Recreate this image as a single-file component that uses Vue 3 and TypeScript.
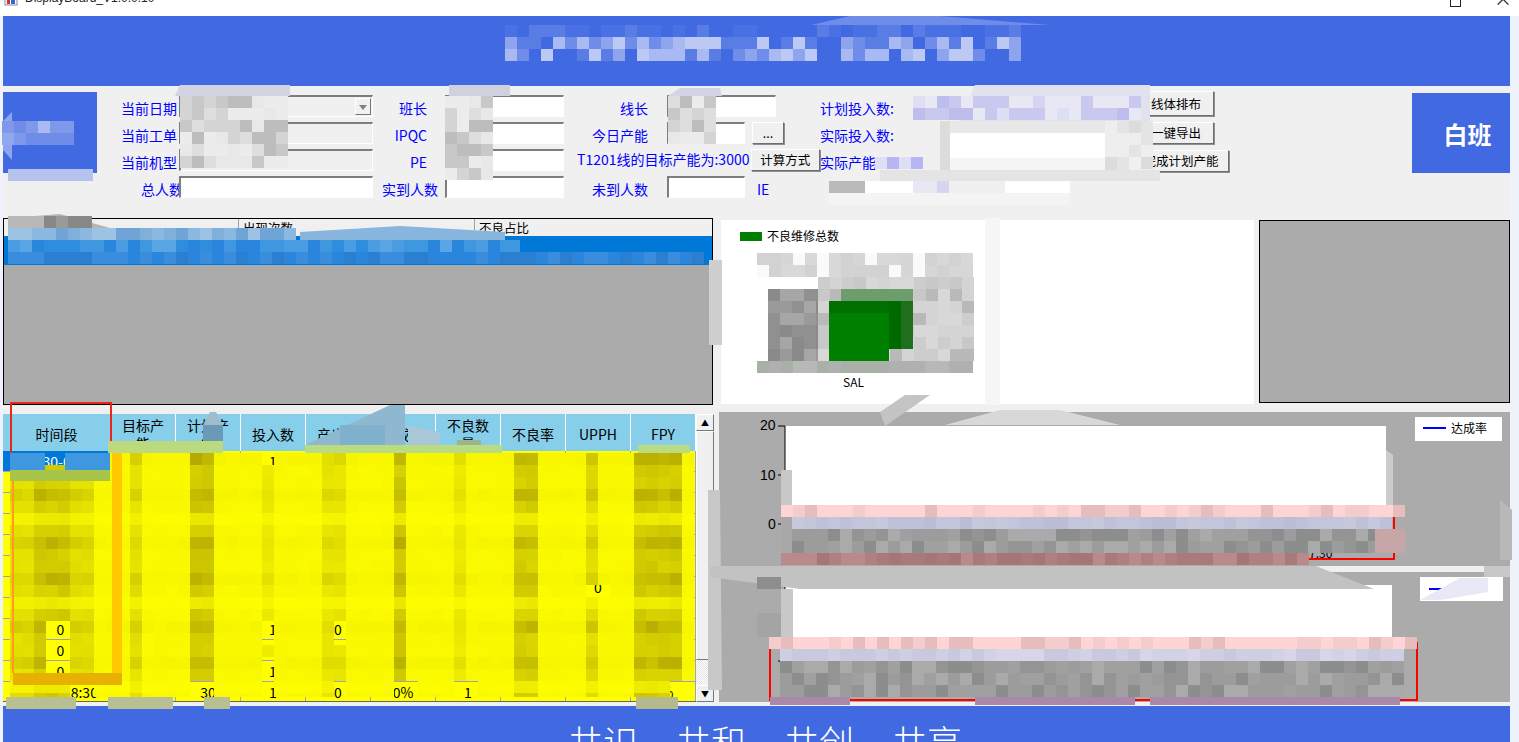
<template>
    <div class="screen">
        <div class="titlebar">
            <svg class="app-icon" width="14" height="14" viewBox="0 0 14 14">
                <rect x="1" y="1" width="12" height="12" fill="#fff" stroke="#7a8aa8" />
                <rect x="3" y="4" width="3" height="8" fill="#c33" />
                <rect x="7" y="2" width="4" height="10" fill="#36c" />
            </svg>
            <span class="app-title">DisplayBoard_V1.0.0.10</span>
            <span class="win-btn max"></span>
            <span class="win-btn close">×</span>
        </div>

        <main class="board">
            <header class="banner"></header>

            <section class="toolbar">
                <div class="logo"></div>
                <div class="form">
                    <label class="lbl first">当前日期</label>
                    <div class="field off combo"><i class="combo-btn"></i></div>
                    <label class="lbl mid">班长</label>
                    <div class="field"></div>
                    <label class="lbl end">线长</label>
                    <div class="field wide"></div>
                    <div></div>
                    <div></div>
                    <label class="lbl">计划投入数:</label>

                    <label class="lbl first">当前工单</label>
                    <div class="field off"></div>
                    <label class="lbl mid">IPQC</label>
                    <div class="field"></div>
                    <label class="lbl end">今日产能</label>
                    <div class="field"></div>
                    <div class="ctl-cell"><button class="btn dots">...</button></div>
                    <div></div>
                    <label class="lbl">实际投入数:</label>

                    <label class="lbl first">当前机型</label>
                    <div class="field off"></div>
                    <label class="lbl mid">PE</label>
                    <div class="field"></div>
                    <div class="target">
                        <span>T1201线的目标产能为:3000</span>
                        <button class="btn calc">计算方式</button>
                    </div>
                    <label class="lbl">实际产能</label>

                    <label class="lbl total">总人数</label>
                    <div class="field"></div>
                    <label class="lbl mid wide-lbl">实到人数</label>
                    <div class="field"></div>
                    <label class="lbl end">未到人数</label>
                    <div class="field"></div>
                    <label class="lbl ie">IE</label>
                </div>
                <div class="actions">
                    <button class="btn act">线体排布</button>
                    <button class="btn act">一键导出</button>
                    <button class="btn act long">完成计划产能</button>
                </div>
                <div class="shift">白班</div>
            </section>

            <section class="middle">
                <div class="defects">
                    <div class="defects-head">
                        <span class="h1"></span>
                        <span class="h2">出现次数</span>
                        <span class="h3">不良占比</span>
                    </div>
                    <div class="defects-row"></div>
                </div>
                <div class="pie-card">
                    <svg width="533" height="184" viewBox="0 0 533 184">
                        <rect x="19" y="12" width="22" height="9" fill="#008000" />
                        <text x="46" y="21" class="svg-txt">不良维修总数</text>
                        <text x="122" y="167" class="svg-txt">SAL</text>
                    </svg>
                </div>
                <div class="blank-card"></div>
            </section>

            <section class="bottom">
                <div class="grid-wrap">
                    <div class="grid">
                        <div v-for="h in heads" :key="h" class="th"><span>{{ h }}</span></div>
                        <template v-for="(row, r) in rows" :key="r">
                            <div
                                v-for="(c, i) in row"
                                :key="i"
                                class="td"
                                :class="{ sel: r === 0 && i === 0, time: i === 0 }"
                            >{{ c }}</div>
                        </template>
                    </div>
                    <div class="scroll">
                        <div class="sb-btn">▲</div>
                        <div class="sb-thumb"></div>
                        <div class="sb-track"></div>
                        <div class="sb-btn">▼</div>
                    </div>
                </div>
                <div class="charts">
                    <svg width="791" height="154" viewBox="0 0 791 154" class="chart">
                        <rect x="66" y="14" width="601" height="100" fill="#fff" />
                        <path d="M66 14V112M59 14H66M59 63H66M59 112H66" stroke="#000" fill="none" />
                        <text x="41" y="18" class="svg-num">20</text>
                        <text x="41" y="68" class="svg-num">10</text>
                        <text x="49" y="117" class="svg-num">0</text>
                        <rect x="696" y="5" width="87" height="24" fill="#fff" />
                        <path d="M704 16H727" stroke="#00f" stroke-width="2" />
                        <text x="732" y="21" class="svg-txt">达成率</text>
                        <path d="M675 94V147H66" stroke="#f00" stroke-width="2" fill="none" />
                        <text x="590" y="146" class="svg-txt">7:30</text>
                    </svg>
                    <div class="chart-gap"></div>
                    <svg width="791" height="130" viewBox="0 0 791 130" class="chart">
                        <rect x="66" y="13" width="607" height="76" fill="#fff" />
                        <path d="M66 13V89H500M59 89H66" stroke="#000" fill="none" />
                        <rect x="701" y="5" width="83" height="24" fill="#fff" />
                        <path d="M710 17H732" stroke="#00f" stroke-width="2" />
                        <path d="M51 70V128H698V70" stroke="#f00" stroke-width="2" fill="none" />
                        <text x="131" y="105" class="svg-txt">07:30</text>
                        <text x="178" y="122" class="svg-txt">07:30-08:30</text>
                    </svg>
                </div>
            </section>

            <footer class="slogan">
                <span>共识</span><span>共和</span><span>共创</span><span>共享</span>
            </footer>
        </main>

        <!-- 打码层 -->
        <svg class="redact" width="1519" height="742" viewBox="0 0 1519 742" shape-rendering="crispEdges">
            <polygon
                v-for="(s, i) in smears"
                :key="'s' + i"
                :points="s.points"
                :fill="s.fill"
                shape-rendering="auto"
            />
            <rect
                v-for="(c, i) in cells"
                :key="'c' + i"
                :x="c.x"
                :y="c.y"
                :width="c.w"
                :height="c.h"
                :fill="c.fill"
            />
            <path d="M11 453V403H111V441" stroke="#e8261c" stroke-width="2" fill="none" />
        </svg>
    </div>
</template>

<script setup lang="ts">
interface Patch {
    x: number;
    y: number;
    cols: number;
    rows: number;
    palette: string[];
}

interface Cell {
    x: number;
    y: number;
    w: number;
    h: number;
    fill: string;
}

const heads = ["时间段", "目标产能", "计划产能", "投入数", "产出数", "达成率", "不良数量", "不良率", "UPPH", "FPY"];

const emptyRow = (): string[] => ["", "", "", "", "", "", "", "", "", ""];

const rows: string[][] = Array.from({ length: 12 }, (_, r) => {
    if (r === 0) return ["07:30-08:30", "", "", "1", "", "", "", "", "", ""];
    if (r === 6) return ["", "", "", "", "", "", "", "", "0", ""];
    if (r === 8) return ["0", "", "", "1", "0", "", "", "", "", "0"];
    if (r === 9) return ["0", "", "", "", "", "", "", "", "", ""];
    if (r === 10) return ["0", "", "", "1", "", "", "", "", "", ""];
    if (r === 11) return ["17:30-18:30", "", "30", "1", "0", "0%", "1", "", "", "0%"];
    return emptyRow();
});

const blues = ["#4169e1", "#5a7de5", "#6f8ce8", "#8ea5ee", "#a9baf2", "#bcc9f5"];
const greys = ["#e8e8e8", "#dedede", "#d4d4d4", "#c8c8c8", "#bdbdbd", "#ececec"];
const lavender = ["#c9c9f0", "#d5d5f2", "#bdbdee", "#dedef5", "#e8e8f5"];
const listBlue = ["#3f97e0", "#2f8ddf", "#4a9de2", "#2a85dd", "#5aa5e4"];
const listTop = ["#7fb0dc", "#8ab8e0", "#6fa5d6", "#9cc2e4"];
const chartGrey = ["#b9b9b9", "#c8c8c8", "#d4d4d4", "#d8d8d8", "#cdcdcd"];
const chartDark = ["#909090", "#9a9a9a", "#a6a6a6", "#8a8a8a"];
const pink = ["#ffd4d4", "#f5cccc", "#e6bcbc", "#ffd4d4", "#ffd4d4"];
const lav2 = ["#c0c0d8", "#c4c4da", "#bcbcd4", "#c8c8dc"];
const lav3 = ["#d2d2e6", "#cfcfe4", "#c8c8de", "#d6d6e8"];
const steel = ["#a0a0a0", "#949494", "#8c8e8e", "#9c9c9c", "#aaaaaa"];
const wine = ["#b08080", "#a87a7a", "#b88a8a", "#a47676"];

const patches: Patch[] = [
    { x: 505, y: 25, cols: 43, rows: 1, palette: ["#4169e1", "#4a71e3", "#5a7de5"] },
    { x: 505, y: 37, cols: 43, rows: 2, palette: blues },
    { x: 2, y: 121, cols: 6, rows: 2, palette: ["#7f98ea", "#92a8ee", "#a9baf2", "#6f8ce8"] },
    { x: 180, y: 96, cols: 9, rows: 6, palette: greys },
    { x: 445, y: 96, cols: 4, rows: 7, palette: greys },
    { x: 668, y: 96, cols: 4, rows: 4, palette: greys },
    { x: 913, y: 96, cols: 19, rows: 2, palette: lavender },
    { x: 1105, y: 121, cols: 4, rows: 5, palette: ["#f0f0f0", "#e4e4e4", "#dcdcdc", "#eeeeee"] },
    { x: 875, y: 157, cols: 4, rows: 1, palette: ["#b6b6f2", "#8f8ff0", "#dedef5"] },
    { x: 829, y: 181, cols: 3, rows: 1, palette: ["#b0b0b0", "#bababa", "#aeaeae"] },
    { x: 913, y: 181, cols: 3, rows: 1, palette: lavender },
    { x: 8, y: 216, cols: 7, rows: 1, palette: ["#9a9a9a", "#b8b8b8", "#d4d4d4", "#888888"] },
    { x: 8, y: 228, cols: 24, rows: 1, palette: listTop },
    { x: 8, y: 240, cols: 41, rows: 1, palette: listBlue },
    { x: 8, y: 252, cols: 58, rows: 1, palette: ["#2a85dd", "#3a8cdc", "#2b7fd0"] },
    { x: 768, y: 289, cols: 5, rows: 6, palette: chartDark },
    { x: 757, y: 253, cols: 18, rows: 2, palette: ["#fafafa", "#d8d8d8", "#d2d2d2", "#d6d6d6"] },
    { x: 818, y: 277, cols: 13, rows: 7, palette: chartGrey },
    { x: 757, y: 361, cols: 18, rows: 1, palette: ["#b0b0b0", "#a8b0a8", "#b8b8b8"] },
    { x: 781, y: 505, cols: 52, rows: 1, palette: pink },
    { x: 792, y: 517, cols: 50, rows: 1, palette: lav2 },
    { x: 792, y: 529, cols: 50, rows: 2, palette: steel },
    { x: 781, y: 553, cols: 44, rows: 1, palette: wine },
    { x: 769, y: 637, cols: 54, rows: 1, palette: pink },
    { x: 780, y: 649, cols: 52, rows: 1, palette: lav3 },
    { x: 780, y: 661, cols: 52, rows: 3, palette: steel },
];

// 伪随机,保证每次渲染打码一致
const noise = (i: number, j: number, seed: number): number => {
    const v = Math.sin(i * 12.9898 + j * 78.233 + seed) * 43758.5453;
    return v - Math.floor(v);
};

const patchCells: Cell[] = patches.flatMap((p, n) => {
    const out: Cell[] = [];
    for (let j = 0; j < p.rows; j++) {
        for (let i = 0; i < p.cols; i++) {
            const idx = Math.floor(noise(i, j, n + 1) * p.palette.length);
            out.push({ x: p.x + i * 12, y: p.y + j * 12, w: 12, h: 12, fill: p.palette[idx] });
        }
    }
    return out;
});

const darkCols: [number, number, number][] = [
    [36, 72, 0.95], [12, 97, 0.6], [133, 145, 0.6], [194, 218, 1], [265, 277, 0.4], [325, 350, 0.5],
    [397, 410, 1], [458, 470, 0.4], [519, 541, 0.9], [589, 602, 0.7], [637, 686, 0.95],
];

// 露出表格文字的位置
const holes: [number, number, number, number][] = [
    [10, 453, 100, 12],
    [266, 453, 14, 17],
    [50, 622, 20, 62],
    [266, 622, 14, 20],
    [330, 622, 16, 20],
    [266, 660, 14, 20],
    [590, 580, 16, 16],
    [76, 684, 18, 20],
    [196, 684, 18, 20],
    [266, 684, 14, 20],
    [330, 684, 16, 20],
    [394, 684, 20, 20],
    [460, 684, 16, 20],
    [674, 684, 16, 20],
];

const inHole = (x: number, y: number): boolean =>
    holes.some(([hx, hy, hw, hh]) => x + 6 >= hx && x + 6 < hx + hw && y + 6 >= hy && y + 6 < hy + hh);

const yellowMix = (x: number, y: number, seed: number): string => {
    const col = darkCols.find(([a, b]) => x + 6 >= a && x + 6 < b);
    const rowPhase = Math.floor((y - 453) / 12) % 7;
    const rowWeight = rowPhase === 0 || rowPhase === 3 ? 1 : rowPhase === 5 ? 0.3 : 0.7;
    const s = (col ? col[2] : 0.12) * rowWeight * (0.75 + noise(x, y, seed) * 0.25);
    const r = Math.round(255 - 75 * s);
    const g = Math.round(255 - 85 * s);
    return `rgb(${r},${g},0)`;
};

const yellowCells: Cell[] = [];
for (let j = 0; j < 21; j++) {
    for (let i = 0; i < 57; i++) {
        const x = 10 + i * 12;
        const y = 453 + j * 12;
        if (inHole(x, y)) continue;
        // 最后一行只到表格底边
        yellowCells.push({ x, y, w: 12, h: j === 20 ? 4 : 12, fill: yellowMix(x, y, 3) });
    }
}

const blocks: Cell[] = [
    { x: 8, y: 169, w: 85, h: 12, fill: "#b5c3ee" },
    { x: 950, y: 133, w: 155, h: 25, fill: "#ffffff" },
    { x: 950, y: 121, w: 155, h: 12, fill: "#e8e8e8" },
    { x: 950, y: 158, w: 155, h: 12, fill: "#f5f5f5" },
    { x: 940, y: 121, w: 10, h: 49, fill: "#dcdcdc" },
    { x: 880, y: 170, w: 280, h: 11, fill: "#e4e4e4" },
    { x: 865, y: 181, w: 48, h: 12, fill: "#ffffff" },
    { x: 1005, y: 181, w: 65, h: 12, fill: "#ffffff" },
    { x: 829, y: 193, w: 240, h: 12, fill: "#f4f4f4" },
    // 饼图中心的绿色块
    { x: 841, y: 289, w: 72, h: 12, fill: "#6d9d6d" },
    { x: 829, y: 301, w: 72, h: 12, fill: "#007000" },
    { x: 829, y: 313, w: 60, h: 48, fill: "#008000" },
    { x: 889, y: 301, w: 12, h: 48, fill: "#006a00" },
    { x: 901, y: 301, w: 12, h: 48, fill: "#1f6f1f" },
    // 表头上的涂抹
    { x: 203, y: 425, w: 20, h: 26, fill: "#6a9ab5" },
    { x: 340, y: 425, w: 45, h: 26, fill: "#7fb0cc" },
    { x: 457, y: 440, w: 24, h: 13, fill: "#9ab58c" },
    // 黄色表格上的红框痕迹
    { x: 112, y: 441, w: 10, h: 244, fill: "#ffc800" },
    { x: 13, y: 673, w: 109, h: 12, fill: "#e8b000" },
    { x: 12, y: 453, w: 2, h: 220, fill: "#ff9a1a" },
    { x: 10, y: 453, w: 35, h: 17, fill: "#3f97e0" },
    { x: 65, y: 453, w: 45, h: 17, fill: "#3f97e0" },
    { x: 10, y: 470, w: 100, h: 11, fill: "#a8c44a" },
    { x: 108, y: 441, w: 115, h: 12, fill: "#bbd97f" },
    { x: 305, y: 445, w: 197, h: 8, fill: "#b9dc82" },
    { x: 638, y: 445, w: 52, h: 8, fill: "#b9dc82" },
    { x: 6, y: 697, w: 70, h: 12, fill: "#b8bf92" },
    { x: 108, y: 697, w: 65, h: 12, fill: "#b8bf92" },
    { x: 204, y: 697, w: 26, h: 12, fill: "#b8bf92" },
    { x: 636, y: 697, w: 42, h: 12, fill: "#b4ba8e" },
    // 图表
    { x: 781, y: 470, w: 11, h: 35, fill: "#c8c8c8" },
    { x: 781, y: 517, w: 11, h: 36, fill: "#a8a8a8" },
    { x: 1375, y: 529, w: 30, h: 24, fill: "#c6a6a6" },
    { x: 781, y: 589, w: 12, h: 48, fill: "#c8c8c8" },
    { x: 757, y: 577, w: 24, h: 12, fill: "#8e8e8e" },
    { x: 757, y: 613, w: 24, h: 24, fill: "#a4a4a4" },
    { x: 770, y: 697, w: 80, h: 8, fill: "#ac88a8" },
    { x: 975, y: 697, w: 160, h: 8, fill: "#ac88a8" },
    { x: 1150, y: 697, w: 250, h: 8, fill: "#ac88a8" },
];

const cells: Cell[] = [...yellowCells, ...patchCells, ...blocks];

const smears = [
    { points: "811,25 850,16 940,16 1050,25", fill: "#6f8ce8" },
    { points: "175,96 180,85 290,85 290,96", fill: "#d2d4e2" },
    { points: "449,96 449,85 510,85 510,96", fill: "#cfd1df" },
    { points: "668,96 680,88 720,88 722,96", fill: "#d4d4e6" },
    { points: "960,121 975,85 1150,85 1150,121", fill: "#e0e3ee" },
    { points: "3,121 12,112 12,160 3,150", fill: "#8ea5ee" },
    { points: "10,218 60,214 110,228 10,228", fill: "#b5b5b5" },
    { points: "300,232 400,226 505,232 505,240 300,240", fill: "#88b5dd" },
    { points: "500,240 520,240 520,252 500,252", fill: "#3f97e0" },
    { points: "709,260 722,260 722,345 709,345", fill: "#cfcfcf" },
    { points: "985,218 1000,218 1000,405 985,405", fill: "#f6f6f6" },
    { points: "880,412 905,395 930,395 885,426", fill: "#c4c4c4" },
    { points: "945,425 1000,410 1060,410 1120,425", fill: "#d8d8d8" },
    { points: "1386,450 1393,455 1393,505 1386,505", fill: "#cccccc" },
    { points: "708,490 720,490 722,690 708,690", fill: "#c8c8c8" },
    { points: "710,566 1316,566 1374,589 800,589 710,577", fill: "#c2c2c2" },
    { points: "1484,566 1510,566 1510,577 1484,577", fill: "#c8c8c8" },
    { points: "1420,600 1460,578 1488,578 1488,592 1440,600", fill: "#e8e8f6" },
    { points: "1500,500 1512,510 1512,560 1500,560", fill: "#b8b8b8" },
    { points: "305,445 390,405 405,405 405,445", fill: "#8fb8d0" },
    { points: "408,425 440,432 440,445 408,445", fill: "#a8c8d8" },
    { points: "203,425 210,412 216,412 223,425", fill: "#9fbccb" },
];
</script>

<style scoped>
.screen {
    position: relative;
    width: 1519px;
    height: 742px;
    overflow: hidden;
    background: #eef2fb;
    font-family: "Noto Sans CJK SC", "Liberation Sans", sans-serif;
}

.titlebar {
    display: flex;
    align-items: flex-start;
    height: 16px;
    overflow: hidden;
    background: #fff;
    color: #222;
    font-size: 12px;
}

.app-icon {
    margin: -8px 0 0 4px;
}

.app-title {
    margin: -10px 0 0 7px;
    line-height: 16px;
    font-family: "Liberation Sans", sans-serif;
}

.win-btn.max {
    margin: -4px 0 0 auto;
    width: 9px;
    height: 9px;
    border: 1px solid #222;
}

.win-btn.close {
    margin: -11px 7px 0 33px;
    font-size: 18px;
    line-height: 18px;
}

.board {
    display: flex;
    flex-direction: column;
    width: 1507px;
    height: 726px;
    margin-left: 3px;
    background: #f0f0f0;
}

.banner {
    flex: none;
    height: 70px;
    background: #4169e1;
}

.toolbar {
    flex: none;
    display: flex;
    height: 132px;
}

.logo {
    width: 94px;
    height: 81px;
    margin-top: 6px;
    background: #4169e1;
}

.form {
    display: grid;
    grid-template-columns: 79px 194px 72px 119px 103px 78px 39px 36px 313px;
    grid-auto-rows: 27px;
    margin: 9px 0 0 3px;
    height: 108px;
    color: #00f;
    font-size: 14px;
}

.lbl {
    line-height: 26px;
    white-space: nowrap;
}

.lbl.first {
    padding-left: 21px;
}

.lbl.total {
    padding-left: 41px;
}

.lbl.mid {
    width: 54px;
    text-align: right;
}

.lbl.wide-lbl {
    width: 65px;
}

.lbl.end {
    text-align: right;
    padding-right: 19px;
}

.lbl.ie {
    padding-left: 12px;
    grid-column: 7 / span 3;
}

.field {
    position: relative;
    height: 22px;
    box-sizing: border-box;
    background: #fff;
    border: 1px solid;
    border-color: #7d7d7d #fff #fff #7d7d7d;
    border-top-width: 2px;
    border-left-width: 2px;
}

.field.off {
    background: #f0f0f0;
}

.field.wide {
    width: 109px;
}

.combo-btn {
    position: absolute;
    top: 1px;
    right: 1px;
    width: 16px;
    height: 17px;
    box-sizing: border-box;
    background: #f0f0f0;
    border: 1px solid;
    border-color: #fff #777 #777 #fff;
}

.combo-btn::after {
    content: "";
    position: absolute;
    left: 3px;
    top: 6px;
    border: 4px solid transparent;
    border-top: 5px solid #808080;
}

.ctl-cell {
    padding-left: 7px;
}

.target {
    grid-column: 5 / span 4;
    display: flex;
    align-items: flex-start;
    padding-left: 13px;
    line-height: 20px;
    white-space: nowrap;
}

.target span {
    width: 175px;
}

.btn {
    box-sizing: border-box;
    padding: 0;
    background: #f0f0f0;
    border: 1px solid;
    border-color: #fff #6e6e6e #6e6e6e #fff;
    box-shadow: 1px 1px 0 #8e8e8e;
    color: #000;
    font-family: inherit;
    font-size: 12.5px;
    line-height: 18px;
    white-space: nowrap;
}

.btn.dots {
    width: 32px;
    height: 22px;
}

.btn.calc {
    width: 70px;
    height: 22px;
}

.actions {
    display: flex;
    flex-direction: column;
    align-items: flex-end;
    gap: 6px;
    width: 96px;
    padding-top: 5px;
}

.btn.act {
    width: 76px;
    height: 22px;
    margin-right: 15px;
}

.btn.act:first-child {
    height: 25px;
}

.btn.long {
    width: 96px;
    margin-right: 0;
}

.shift {
    display: flex;
    align-items: center;
    justify-content: center;
    box-sizing: border-box;
    width: 98px;
    height: 80px;
    margin: 7px 0 0 auto;
    padding-left: 13px;
    background: #4169e1;
    color: #fff;
    font-size: 24px;
    font-weight: 700;
}

.middle {
    flex: none;
    display: flex;
    align-items: flex-start;
    height: 194px;
}

.defects {
    width: 710px;
    height: 187px;
    box-sizing: border-box;
    background: #ababab;
    border: 1px solid #000;
}

.defects-head {
    display: flex;
    height: 17px;
    background: #f0f0f0;
    color: #000;
    font-size: 12.5px;
    line-height: 18px;
}

.defects-head span {
    box-sizing: border-box;
    padding-left: 4px;
    border-left: 1px solid #a0a0a0;
}

.defects-head .h1 {
    width: 234px;
    border-left: 0;
}

.defects-head .h2 {
    width: 236px;
}

.defects-row {
    height: 29px;
    background: #0078d7;
}

.pie-card {
    width: 533px;
    height: 184px;
    margin: 2px 0 0 8px;
    background: #fff;
}

.blank-card {
    width: 251px;
    height: 183px;
    box-sizing: border-box;
    margin: 2px 0 0 5px;
    background: #ababab;
    border: 1px solid #000;
}

.bottom {
    flex: none;
    display: flex;
    height: 290px;
}

.grid-wrap {
    display: flex;
    width: 711px;
    padding-top: 2px;
    box-sizing: border-box;
}

.grid {
    display: grid;
    grid-template-columns: 108px repeat(9, 65px);
    grid-template-rows: 37px repeat(12, 21px);
    width: 693px;
    height: 288px;
    overflow: hidden;
    background: #ff0;
    border-bottom: 1px solid #666;
    box-sizing: border-box;
    font-size: 14px;
}

.th {
    display: flex;
    align-items: flex-start;
    justify-content: center;
    box-sizing: border-box;
    height: 37px;
    padding: 2px 8px 0;
    background: #87ceeb;
    border-right: 1px solid #fff;
    overflow: hidden;
    line-height: 18px;
    text-align: center;
}

.th:nth-child(1),
.th:nth-child(4),
.th:nth-child(5),
.th:nth-child(6),
.th:nth-child(8),
.th:nth-child(9),
.th:nth-child(10) {
    align-items: center;
    padding-top: 3px;
}

.td {
    box-sizing: border-box;
    background: #ff0;
    border-right: 1px solid #9f9fc8;
    border-bottom: 1px solid #9f9fc8;
    line-height: 20px;
    text-align: center;
    overflow: hidden;
    white-space: nowrap;
}

.td.time {
    padding-left: 8px;
}

.td.sel {
    background: #0078d7;
    color: #fff;
}

.scroll {
    display: flex;
    flex-direction: column;
    width: 18px;
    height: 288px;
    background: #f0f0f0;
}

.sb-btn {
    flex: none;
    height: 17px;
    box-sizing: border-box;
    background: #f0f0f0;
    border: 1px solid;
    border-color: #fff #777 #777 #fff;
    color: #000;
    font-size: 8px;
    line-height: 15px;
    text-align: center;
}

.sb-thumb {
    flex: none;
    height: 229px;
    box-sizing: border-box;
    background: #f0f0f0;
    border: 1px solid;
    border-color: #fff #777 #777 #fff;
}

.sb-track {
    flex: 1;
    background: repeating-conic-gradient(#fff 0 25%, #e4e4e4 0 50%) 0 0 / 2px 2px;
}

.charts {
    display: flex;
    flex-direction: column;
    width: 791px;
    margin-left: 5px;
    background: #ababab;
}

.chart {
    display: block;
}

.chart-gap {
    height: 6px;
    background: #f0f0f0;
}

.svg-txt {
    font-family: "Noto Sans CJK SC", sans-serif;
    font-size: 12px;
}

.svg-num {
    font-family: "Liberation Sans", sans-serif;
    font-size: 14px;
}

.slogan {
    flex: none;
    display: flex;
    gap: 38px;
    height: 36px;
    margin-top: 4px;
    padding: 12px 0 0 565px;
    box-sizing: border-box;
    overflow: hidden;
    background: #4169e1;
    color: #fff;
    font-size: 35px;
    font-weight: 300;
    line-height: 46px;
}

.redact {
    position: absolute;
    left: 0;
    top: 0;
    pointer-events: none;
}
</style>
